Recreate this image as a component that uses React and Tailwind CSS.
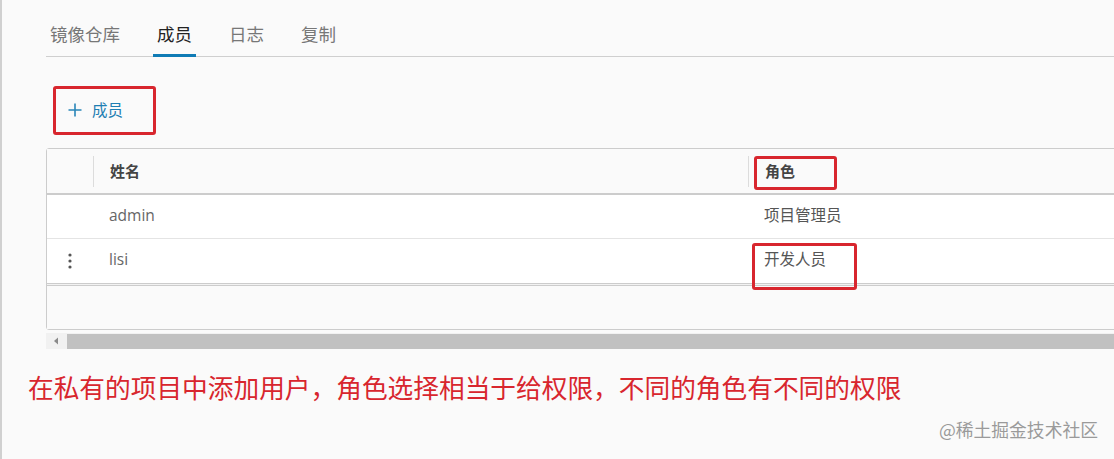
import React from 'react';

const font = { fontFamily: '"Open Sans", "Noto Sans CJK SC", sans-serif' };

const tabs = [
  { name: '镜像仓库', active: false },
  { name: '成员', active: true },
  { name: '日志', active: false },
  { name: '复制', active: false },
];

const members = [
  { name: 'admin', role: '项目管理员', menu: false },
  { name: 'lisi', role: '开发人员', menu: true },
];

const App = () => {
  return (
    <div style={font} className="relative h-[459px] w-[1114px] overflow-hidden border-l-2 border-[#d0d0d0] bg-[#fafafa]">
      <div className="ml-[44px]">
        {/* tabs */}
        <div className="flex h-[57px] gap-[29px] border-b border-[#cfcfcf]">
          {tabs.map((tab) => (
            <div
              key={tab.name}
              className={`-mb-px flex items-start px-[4px] pt-[22px] text-[17.5px] leading-[24px] border-b-[3px] ${
                tab.active ? 'border-[#0f7bb5] text-[#222]' : 'border-transparent text-[#777]'
              }`}
            >
              {tab.name}
            </div>
          ))}
        </div>

        {/* add member */}
        <div className="ml-[7px] mt-[29px] flex h-[49px] w-[103px] items-center rounded-[3px] border-[3px] border-[#d8262e] pl-[12px]">
          <svg width="14" height="14" viewBox="0 0 14 14" className="mt-[-2px]">
            <path d="M7 0.5v13M0.5 7h13" stroke="#2a86b8" strokeWidth="1.6" fill="none" />
          </svg>
          <span className="ml-[10px] text-[15.5px] text-[#1f7fb3]">成员</span>
        </div>

        {/* table */}
        <div className="relative mt-[13px] w-[1100px] rounded-l-[3px] border border-[#cccccc] bg-white">
          <div className="flex h-[44px] items-center bg-[#fafafa]">
            <div className="w-[46px]" />
            <div className="h-[31px] w-px bg-[#dcdcdc]" />
            <div className="w-[654px] pl-4 text-[15px] font-semibold text-[#444]">姓名</div>
            <div className="h-[31px] w-px bg-[#dcdcdc]" />
            <div className="pl-4 text-[15px] font-semibold text-[#444]">角色</div>
          </div>
          <div className="h-[2px] bg-[#cccccc]" />
          {members.map((m, i) => (
            <div
              key={m.name}
              className={`flex h-[44px] items-center text-[15.5px] text-[#666] ${i === 0 ? 'border-b border-[#e4e4e4]' : ''}`}
            >
              <div className="flex w-[46px] justify-center">
                {m.menu && (
                  <svg width="4" height="16" viewBox="0 0 4 16">
                    <circle cx="2" cy="2" r="1.6" fill="#555" />
                    <circle cx="2" cy="8" r="1.6" fill="#555" />
                    <circle cx="2" cy="14" r="1.6" fill="#555" />
                  </svg>
                )}
              </div>
              <div className="w-[655px] pl-4 pb-[2px]">{m.name}</div>
              <div className="pl-4 pb-[2px] text-[15.5px] text-[#555]">{m.role}</div>
            </div>
          ))}
          <div className="h-[3px] border-y border-[#cccccc] bg-[#f2f2f2]" />
          <div className="h-[43px] bg-[#fafafa]" />

          {/* annotation boxes */}
          <div className="absolute left-[707px] top-[7px] h-[34px] w-[83px] rounded-[3px] border-[3px] border-[#d8262e]" />
          <div className="absolute left-[705px] top-[94px] h-[47px] w-[105px] rounded-[3px] border-[3px] border-[#d8262e]" />
        </div>

        {/* horizontal scrollbar */}
        <div className="mt-[3px] flex h-[16px] w-[1100px] items-center bg-[#f1f1f1]">
          <svg width="21" height="16" viewBox="0 0 21 16">
            <path d="M12 4.5 L8 8 L12 11.5 Z" fill="#8a8a8a" />
          </svg>
          <div className="h-[15px] flex-1 bg-[#c1c1c1]" />
        </div>
      </div>

      {/* caption */}
      <p className="ml-[26px] mt-[21px] text-[25.7px] leading-[34px] text-[#d8262e]" style={{ fontFamily: '"Noto Sans CJK SC", sans-serif' }}>
        在私有的项目中添加用户，角色选择相当于给权限，不同的角色有不同的权限
      </p>

      <div className="mt-[13px] pr-[16px] text-right text-[17.8px] leading-[24px] text-[#9a9a9a]" style={{ fontFamily: '"Noto Sans CJK SC", sans-serif' }}>
        @稀土掘金技术社区
      </div>
    </div>
  );
};

export default App;
